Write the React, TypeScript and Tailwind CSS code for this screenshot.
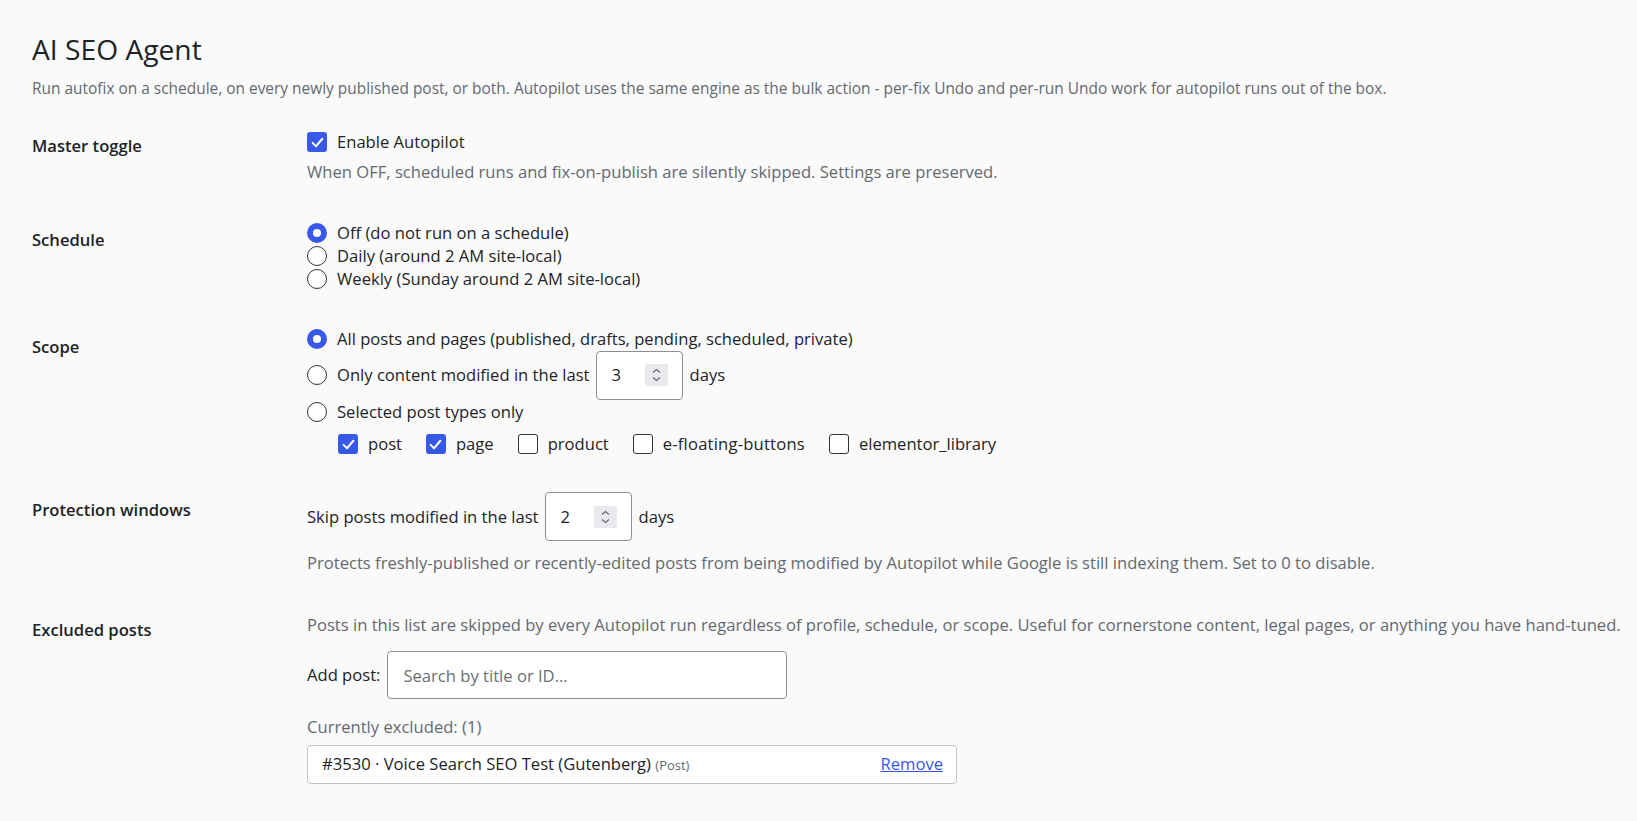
import React from 'react';

const A = 'When OFF, scheduled runs and fix-on-publish are silently skipped. Settings are preserved.';
const B = 'Run autofix on a schedule, on every newly published post, or both. Autopilot uses the same engine as the bulk action - per-fix Undo and per-run Undo work for autopilot runs out of the box.';

const Check = () => (
  <span className="w-5 h-5 rounded-[3px] bg-[#3858e9] flex items-center justify-center shrink-0">
    <svg viewBox="0 0 20 20" className="w-[15px] h-[15px]">
      <path d="M3.5 10.5 L8 15 L16.5 5" stroke="white" strokeWidth="2.6" fill="none" strokeLinecap="round" strokeLinejoin="round" />
    </svg>
  </span>
);
const Box = () => <span className="w-5 h-5 rounded-[3px] border-[1.5px] border-[#333] bg-white shrink-0" />;
const RadioOn = () => <span className="w-5 h-5 rounded-full border-[6px] border-[#3858e9] bg-white shrink-0" />;
const RadioOff = () => <span className="w-5 h-5 rounded-full border-[1.5px] border-[#333] bg-white shrink-0" />;

const NumBox = ({ v }: { v: string }) => (
  <span className="w-[87px] h-[49px] border border-[#8c8f94] rounded-[4px] bg-white flex items-center justify-between pl-[15px] pr-[14px] shrink-0">
    <span className="text-[#1d2327] pt-[1px]">{v}</span>
    <span className="w-[23px] h-[22px] bg-[#e9e9ed] rounded-[2px] flex items-center justify-center">
      <svg viewBox="0 0 23 22" className="w-[23px] h-[22px]">
        <path d="M8 8.5 L11.5 5.5 L15 8.5" stroke="#6b6b6b" strokeWidth="1.2" fill="none" />
        <path d="M8 13.5 L11.5 16.5 L15 13.5" stroke="#6b6b6b" strokeWidth="1.2" fill="none" />
      </svg>
    </span>
  </span>
);

const Label = ({ children, pt }: { children: React.ReactNode; pt: string }) => (
  <div className={`w-[275px] shrink-0 ${pt}`}>
    <div className="h-[23px] leading-[23px] font-semibold text-[#1d2327]">{children}</div>
  </div>
);

export default function App() {
  return (
    <div className="min-h-[821px] bg-[#fafafa] font-['Open_Sans',sans-serif] text-[16.6px] text-[#1d2327] pl-[32px] pt-[29.5px]">
      <h1 className="h-[38px] leading-[38px] text-[28.2px] font-normal text-[#1d2327]">AI SEO Agent</h1>
      <p className="mt-[9.5px] h-[22px] leading-[22px] text-[15.45px] text-[#646970]">{B}</p>

      {/* Master toggle */}
      <div className="flex mt-[31.5px]">
        <Label pt="pt-[3px]">Master toggle</Label>
        <div className="flex flex-col">
          <div className="h-[23px] flex items-center gap-[10px]">
            <Check />
            <span>Enable Autopilot</span>
          </div>
          <div className="mt-[6px] h-[23px] leading-[23px] text-[#646970]">{A}</div>
        </div>
      </div>

      {/* Schedule */}
      <div className="flex mt-[39px]">
        <Label pt="pt-[6px]">Schedule</Label>
        <div className="flex flex-col">
          <div className="h-[23px] flex items-center gap-[10px]">
            <RadioOn />
            <span>Off (do not run on a schedule)</span>
          </div>
          <div className="h-[23px] flex items-center gap-[10px]">
            <RadioOff />
            <span>Daily (around 2 AM site-local)</span>
          </div>
          <div className="h-[23px] flex items-center gap-[10px]">
            <RadioOff />
            <span>Weekly (Sunday around 2 AM site-local)</span>
          </div>
        </div>
      </div>

      {/* Scope */}
      <div className="flex mt-[37px]">
        <Label pt="pt-[7px]">Scope</Label>
        <div className="flex flex-col">
          <div className="h-[23px] flex items-center gap-[10px]">
            <RadioOn />
            <span>All posts and pages (published, drafts, pending, scheduled, private)</span>
          </div>
          <div className="mt-[0.5px] h-[48px] flex items-center">
            <RadioOff />
            <span className="ml-[10px] mr-[6px]">Only content modified in the last</span>
            <NumBox v="3" />
            <span className="ml-[7px]">days</span>
          </div>
          <div className="mt-[1.5px] h-[23px] flex items-center gap-[10px]">
            <RadioOff />
            <span>Selected post types only</span>
          </div>
          <div className="mt-[9px] h-[23px] flex items-center pl-[31px] gap-[24px]">
            <span className="flex items-center gap-[10px]">
              <Check />
              <span>post</span>
            </span>
            <span className="flex items-center gap-[10px]">
              <Check />
              <span>page</span>
            </span>
            <span className="flex items-center gap-[10px]">
              <Box />
              <span>product</span>
            </span>
            <span className="flex items-center gap-[10px]">
              <Box />
              <span className="tracking-[0.2px]">e-floating-buttons</span>
            </span>
            <span className="flex items-center gap-[10px]">
              <Box />
              <span>elementor_library</span>
            </span>
          </div>
        </div>
      </div>

      {/* Protection windows */}
      <div className="flex mt-[36.5px]">
        <Label pt="pt-[5.5px]">Protection windows</Label>
        <div className="flex flex-col">
          <div className="h-[49px] flex items-center">
            <span className="mr-[6px] pt-[2px]">Skip posts modified in the last</span>
            <NumBox v="2" />
            <span className="ml-[7px] pt-[2px]">days</span>
          </div>
          <div className="mt-[9.5px] h-[23px] leading-[23px] text-[#646970]">
            Protects freshly-published or recently-edited posts from being modified by Autopilot while Google is still indexing them. Set to 0 to disable.
          </div>
        </div>
      </div>

      {/* Excluded posts */}
      <div className="flex mt-[39px] pb-[30px]">
        <Label pt="pt-[5px]">Excluded posts</Label>
        <div className="flex flex-col">
          <div className="h-[23px] leading-[23px] text-[#646970] whitespace-nowrap">
            Posts in this list are skipped by every Autopilot run regardless of profile, schedule, or scope. Useful for cornerstone content, legal pages, or anything you have hand-tuned.
          </div>
          <div className="mt-[15.5px] h-[48px] flex items-center">
            <span className="mr-[7px]">Add post:</span>
            <input
              type="text"
              placeholder="Search by title or ID..."
              className="w-[400px] h-[48px] border border-[#8c8f94] rounded-[4px] bg-white px-[15px] text-[16.6px] text-[#1d2327] placeholder:text-[#6b6f75] outline-none"
            />
          </div>
          <div className="mt-[15.5px] h-[23px] leading-[23px] text-[#646970]">Currently excluded: (1)</div>
          <div className="mt-[7.5px] w-[650px] h-[39px] border border-[#c3c4c7] rounded-[4px] bg-white flex items-center justify-between pl-[14px] pr-[13px]">
            <span>
              #3530 · Voice Search SEO Test (Gutenberg) <span className="text-[13px] text-[#646970]">(Post)</span>
            </span>
            <a href="#" className="text-[#3858e9] underline">
              Remove
            </a>
          </div>
        </div>
      </div>
    </div>
  );
}
